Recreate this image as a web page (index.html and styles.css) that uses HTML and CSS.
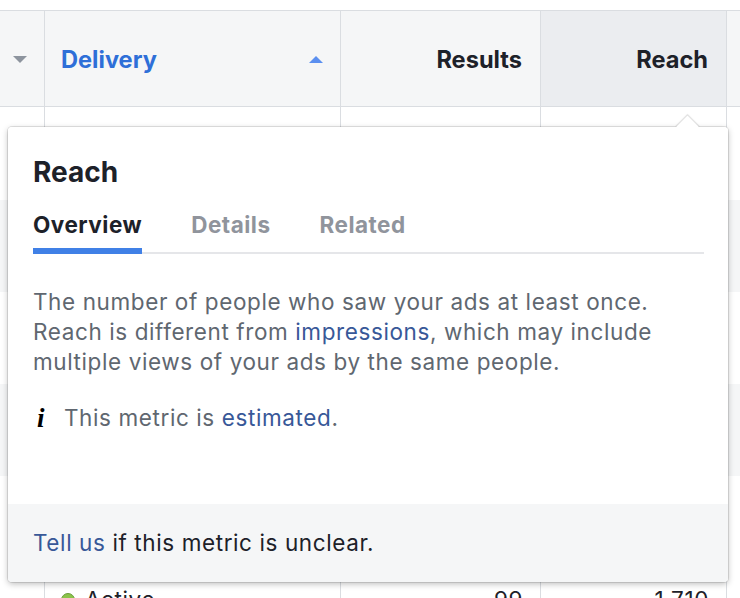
FILE: index.html
```html
<!DOCTYPE html>
<html lang="en">
<head>
<meta charset="utf-8">
<title>Reach</title>
<link rel="stylesheet" href="styles.css">
</head>
<body>
<div class="page">
  <div class="table">
    <div class="row head">
      <div class="cell c1"><span class="caret-down"></span></div>
      <div class="cell c2"><span class="h h-blue">Delivery</span><span class="caret-up"></span></div>
      <div class="cell c3 right"><span class="h">Results</span></div>
      <div class="cell c4 right sorted"><span class="h">Reach</span></div>
      <div class="cell c5"></div>
    </div>
    <div class="row first"><div class="cell c1"></div><div class="cell c2"></div><div class="cell c3"></div><div class="cell c4"></div><div class="cell c5"></div></div>
    <div class="row alt"><div class="cell c1"></div><div class="cell c2"></div><div class="cell c3"></div><div class="cell c4"></div><div class="cell c5"></div></div>
    <div class="row"><div class="cell c1"></div><div class="cell c2"></div><div class="cell c3"></div><div class="cell c4"></div><div class="cell c5"></div></div>
    <div class="row alt"><div class="cell c1"></div><div class="cell c2"></div><div class="cell c3"></div><div class="cell c4"></div><div class="cell c5"></div></div>
    <div class="row"><div class="cell c1"></div><div class="cell c2"></div><div class="cell c3"></div><div class="cell c4"></div><div class="cell c5"></div></div>
    <div class="row last">
      <div class="cell c1"></div>
      <div class="cell c2"><span class="dot"></span><span class="val">Active</span></div>
      <div class="cell c3 right"><span class="val">99</span></div>
      <div class="cell c4 right"><span class="val">1,710</span></div>
      <div class="cell c5"></div>
    </div>
  </div>

  <div class="popup">
    <div class="arrow"></div>
    <div class="pop-body">
      <div class="title">Reach</div>
      <div class="tabs">
        <div class="tab active">Overview</div>
        <div class="tab">Details</div>
        <div class="tab">Related</div>
      </div>
      <p class="desc">The number of people who saw your ads at least once. Reach is different from <a class="link">impressions</a>, which may include multiple views of your ads by the same people.</p>
      <div class="note"><span class="info">i</span>This metric is <a class="link">estimated</a>.</div>
    </div>
    <div class="pop-foot"><span><a class="link">Tell us</a> if this metric is unclear.</span></div>
  </div>
</div>
</body>
</html>
```

FILE: styles.css
```css
* { box-sizing: border-box; }
html, body { margin: 0; padding: 0; }
body {
  width: 740px;
  height: 598px;
  overflow: hidden;
  background: #fff;
  font-family: Inter, "Liberation Sans", Arial, sans-serif;
  color: #1d2129;
}
.page { position: relative; width: 740px; height: 598px; overflow: hidden; }
.table { padding-top: 10px; }
.row { display: flex; height: 92px; background: #fff; }
.row.first { height: 93px; }
.row.alt { background: #f5f6f7; }
.row.head {
  height: 97px;
  background: #f5f6f7;
  border-top: 1px solid #dadde1;
  border-bottom: 1px solid #dadde1;
}
.cell {
  flex-shrink: 0;
  display: flex;
  align-items: center;
  border-right: 1px solid #dadde1;
  padding: 0 18px 0 16px;
}
.row.head .cell { padding-top: 2px; }
.c1 { width: 45px; padding: 0; justify-content: center; }
.c2 { width: 296px; justify-content: space-between; padding-right: 17px; }
.c3 { width: 200px; }
.c4 { width: 186px; }
.c5 { flex: 1 1 auto; padding: 0; border-right: none; }
.right { justify-content: flex-end; }
.sorted { background: #ebedf0; }
.h { font-size: 23.6px; font-weight: 700; color: #1d2129; }
.h-blue { color: #2e6fd8; }
.caret-down {
  width: 0; height: 0;
  border-left: 7px solid transparent;
  border-right: 7px solid transparent;
  border-top: 7px solid #8d949e;
  margin-left: -5px;
}
.caret-up {
  width: 0; height: 0;
  border-left: 7px solid transparent;
  border-right: 7px solid transparent;
  border-bottom: 7px solid #5b8ff0;
}
.row.last .cell { align-items: flex-start; padding-top: 18px; }
.row.last .c1, .row.last .c5 { padding-top: 0; }
.row.last .c2 { justify-content: flex-start; }
.row.last .c3, .row.last .c4 { padding-right: 17px; }
.dot {
  width: 14px; height: 14px; border-radius: 50%;
  background: #8bc34a; border: 1px solid #6a9d3a;
  margin-top: 7px; margin-right: 10px;
}
.val { font-size: 22.5px; color: #1d2129; letter-spacing: 0.6px; }

.popup {
  position: absolute;
  left: 8px;
  top: 127px;
  width: 720px;
  height: 455px;
  background: #fff;
  border-radius: 4px;
  box-shadow: 0 0 0 1px rgba(0,0,0,0.1), 0 2px 6px rgba(0,0,0,0.26);
  display: flex;
  flex-direction: column;
}
.arrow {
  position: absolute;
  top: -8px;
  right: 32px;
  width: 17px;
  height: 17px;
  background: #fff;
  transform: rotate(45deg);
  box-shadow: -1px -1px 1px rgba(0,0,0,0.14);
}
.pop-body {
  position: relative;
  flex: 1;
  padding: 28px 24px 0 25px;
  background: #fff;
  border-radius: 4px 4px 0 0;
}
.title { font-size: 28px; font-weight: 700; color: #1d2129; line-height: 34px; }
.tabs {
  display: flex;
  margin-top: 22px;
  border-bottom: 2px solid #e5e6e9;
}
.tab {
  font-size: 22.5px;
  letter-spacing: 0.5px;
  font-weight: 700;
  color: #90949c;
  line-height: 28px;
  padding-bottom: 9px;
  margin-right: 49px;
  margin-bottom: -2px;
  border-bottom: 6px solid transparent;
}
.tab.active { color: #1d2129; border-bottom-color: #4080e6; }
.desc {
  margin: 33px 0 0;
  font-size: 22.5px;
  letter-spacing: 0.6px;
  line-height: 30px;
  color: #606770;
}
.link { color: #385898; text-decoration: none; }
.note {
  margin-top: 26px;
  font-size: 22.5px;
  letter-spacing: 0.6px;
  line-height: 30px;
  color: #606770;
}
.info {
  display: inline-block;
  font-family: "Liberation Serif", "DejaVu Serif", serif;
  font-style: italic;
  font-weight: 700;
  font-size: 27px;
  line-height: 30px;
  color: #000;
  width: 31px;
  padding-left: 4px;
  vertical-align: top;
}
.pop-foot {
  height: 78px;
  background: #f5f6f7;
  border-radius: 0 0 4px 4px;
  padding: 0 25px;
  display: flex;
  align-items: center;
  font-size: 22.5px;
  letter-spacing: 0.6px;
  line-height: 26px;
  color: #1d2129;
}
```
